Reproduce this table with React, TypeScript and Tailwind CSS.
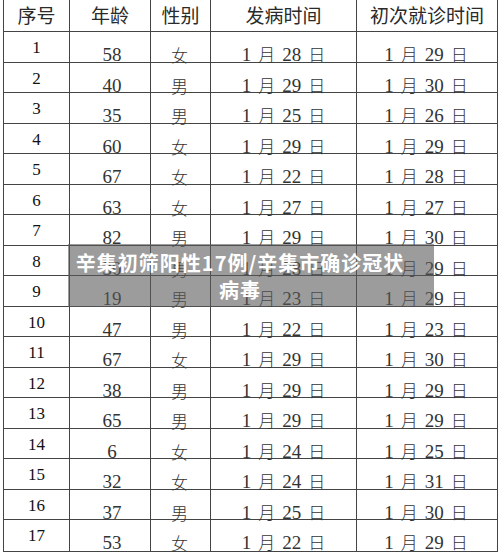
const ROWS: [number, number, string, string, string][] = [
  [1, 58, '女', '28', '29'],
  [2, 40, '男', '29', '30'],
  [3, 35, '男', '25', '26'],
  [4, 60, '女', '29', '29'],
  [5, 67, '女', '22', '28'],
  [6, 63, '女', '27', '27'],
  [7, 82, '男', '29', '30'],
  [8, 30, '男', '28', '29'],
  [9, 19, '男', '23', '29'],
  [10, 47, '男', '22', '23'],
  [11, 67, '女', '29', '30'],
  [12, 38, '男', '29', '29'],
  [13, 65, '男', '29', '29'],
  [14, 6, '女', '24', '25'],
  [15, 32, '女', '24', '31'],
  [16, 37, '男', '25', '30'],
  [17, 53, '女', '22', '29'],
];

const SERIF = 'font-["Liberation_Serif","Noto_Sans_CJK_SC",serif]';
const SANS = 'font-["Noto_Sans_CJK_SC",sans-serif]';

function DateText({ day }: { day: string }) {
  return (
    <span className="inline-flex items-baseline gap-[7px]">
      <span>1</span>
      <span className={`${SANS} text-[17px] font-light`}>月</span>
      <span>{day}</span>
      <span className={`${SANS} text-[17px] font-light`}>日</span>
    </span>
  );
}

export default function App() {
  return (
    <div className="relative h-[552px] w-[500px] overflow-hidden bg-white">
      <div className="ml-[3px] w-[495px] border-x border-b border-[#444] text-[#222]">
        <div
          className={`grid h-[32px] grid-cols-[66px_81px_60px_146px_140px] border-b border-[#444] text-[19px] text-[#2a2a2a] ${SANS}`}
        >
          <div className="flex items-center justify-center border-r border-[#444]">序号</div>
          <div className="flex items-center justify-center border-r border-[#444]">年龄</div>
          <div className="flex items-center justify-center border-r border-[#444]">性别</div>
          <div className="flex items-center justify-center border-r border-[#444]">发病时间</div>
          <div className="flex items-center justify-center">初次就诊时间</div>
        </div>
        {ROWS.map(([n, age, sex, onset, visit], i) => (
          <div
            key={n}
            className={`grid h-[30.5px] grid-cols-[66px_81px_60px_146px_140px] text-[19px] leading-none ${SERIF} ${
              i < ROWS.length - 1 ? 'border-b border-[#444]' : ''
            }`}
          >
            <div className="flex items-center justify-center border-r border-[#444] pb-[1px] text-[17px] text-[#111]">
              {n}
            </div>
            <div className="flex items-center justify-center border-r border-[#444] pt-[13px] pl-[4px] text-[#333]">
              {age}
            </div>
            <div
              className={`flex items-center justify-center border-r border-[#444] pt-[13px] pr-[2px] text-[17px] font-light text-[#333] ${SANS}`}
            >
              {sex}
            </div>
            <div className="flex items-center justify-center border-r border-[#444] pt-[13px] text-[#333]">
              <DateText day={onset} />
            </div>
            <div className="flex items-center justify-center pt-[13px] pr-[2px] text-[#333]">
              <DateText day={visit} />
            </div>
          </div>
        ))}
      </div>

      <div className="absolute left-[68px] top-[244px] flex h-[63px] w-[366px] items-center justify-center bg-[rgba(90,90,90,0.6)] pr-[22px]">
        <div
          className={`text-center text-[20px] font-bold leading-[27px] tracking-[1px] text-white ${SANS}`}
        >
          辛集初筛阳性17例/辛集市确诊冠状
          <br />
          病毒
        </div>
      </div>
    </div>
  );
}
